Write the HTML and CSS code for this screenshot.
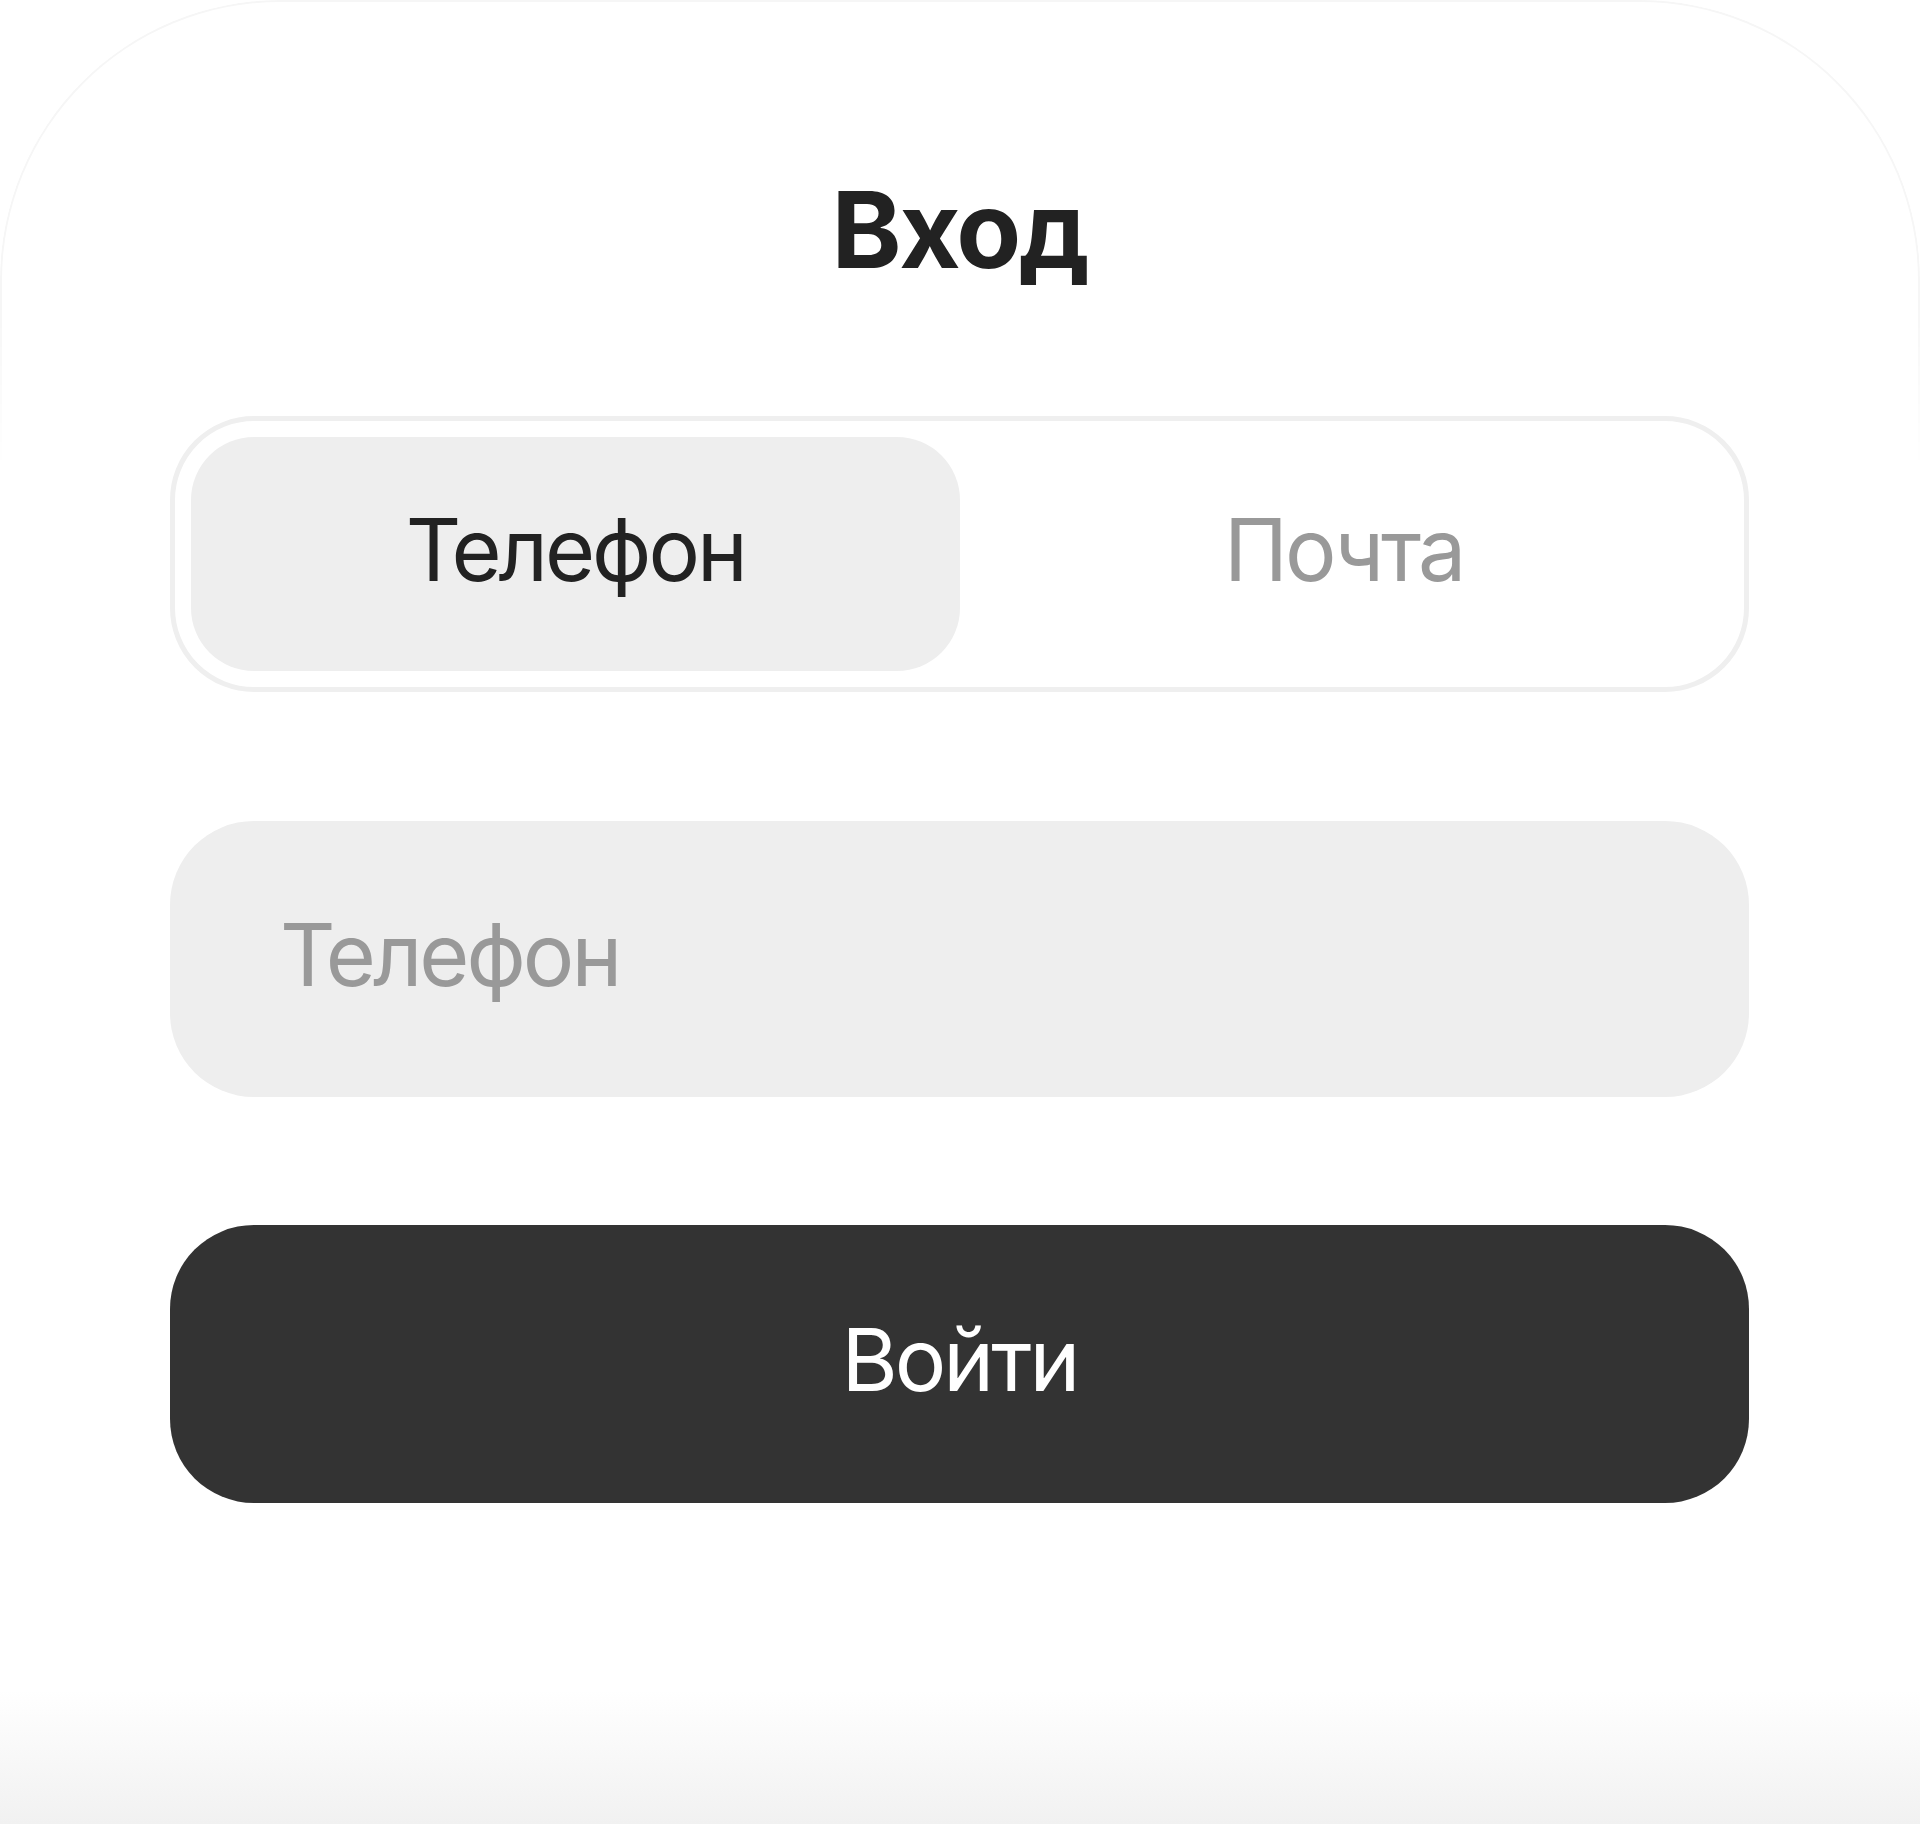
FILE: index.html
```html
<!DOCTYPE html>
<html lang="ru">
<head>
    <meta charset="UTF-8">
    <meta name="viewport" content="width=device-width, initial-scale=1.0">
    <title>Вход</title>
    <link rel="stylesheet" href="styles.css">
</head>
<body>

    <main class="card">
        <h1 class="title">Вход</h1>

        <div class="switch">
            <button type="button" class="switch-tab is-active">Телефон</button>
            <button type="button" class="switch-tab">Почта</button>
        </div>

        <form class="login-form">
            <input type="tel" class="field" placeholder="Телефон">
            <button type="submit" class="submit">Войти</button>
        </form>
    </main>

</body>
</html>
```

FILE: styles.css
```css
html, body {
    margin: 0;
    padding: 0;
}

body {
    font-family: Inter, "Noto Sans", "Liberation Sans", sans-serif;
    color: #222222;
    background: linear-gradient(to bottom, #ffffff 0, #ffffff 1690px, #f1f1f1 1824px);
    min-height: 1824px;
}

.card {
    position: relative;
    box-sizing: border-box;
    width: 1920px;
    min-height: 1700px;
    padding: 177px 171px 0 170px;
    border-radius: 280px 280px 0 0;
}

/* faint outline of the sheet, only visible near the top */
.card::before {
    content: "";
    position: absolute;
    inset: 0;
    border: 2px solid #f6f6f6;
    border-bottom: none;
    border-radius: 280px 280px 0 0;
    -webkit-mask-image: linear-gradient(to bottom, #000 0, #000 300px, transparent 470px);
    mask-image: linear-gradient(to bottom, #000 0, #000 300px, transparent 470px);
    pointer-events: none;
}

.title {
    margin: 0;
    font-size: 106px;
    font-weight: 700;
    line-height: 1;
    letter-spacing: -0.022em;
    text-align: center;
    color: #222222;
}

.switch {
    display: grid;
    grid-template-columns: 1fr 1fr;
    margin-top: 133px;
    padding: 16px;
    border: 5px solid #efefef;
    border-radius: 84px;
    background-color: #ffffff;
}

.switch-tab {
    display: flex;
    align-items: center;
    justify-content: center;
    height: 234px;
    padding: 0 0 9px;
    border: none;
    border-radius: 63px;
    background: transparent;
    font-family: inherit;
    font-size: 86px;
    line-height: 1;
    letter-spacing: -0.035em;
    color: #999999;
    cursor: pointer;
}

.switch-tab.is-active {
    background-color: #eeeeee;
    color: #222222;
}

.login-form {
    display: flex;
    flex-direction: column;
    gap: 128px;
    margin-top: 129px;
}

.field {
    box-sizing: border-box;
    width: 100%;
    height: 276px;
    padding: 0 110px 9px;
    border: none;
    border-radius: 84px;
    background-color: #eeeeee;
    font-family: inherit;
    font-size: 86px;
    letter-spacing: -0.035em;
    color: #222222;
    outline: none;
}

.field::placeholder {
    color: #999999;
}

.submit {
    height: 278px;
    padding: 0 0 8px;
    border: none;
    border-radius: 84px;
    background-color: #333333;
    color: #ffffff;
    font-family: inherit;
    font-size: 86px;
    line-height: 1;
    letter-spacing: -0.035em;
    cursor: pointer;
}
```
